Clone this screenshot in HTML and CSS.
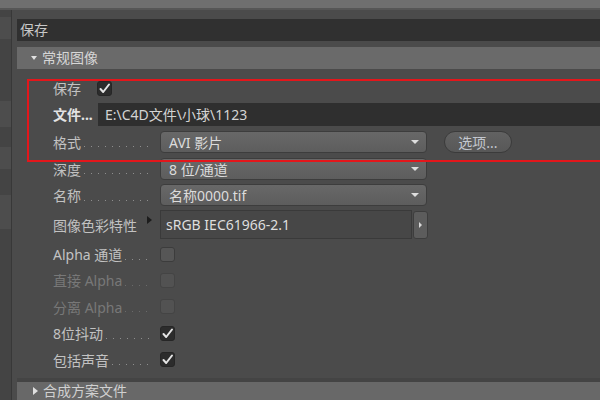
FILE: index.html
```html
<!DOCTYPE html>
<html lang="zh-CN">
<head>
  <meta charset="utf-8">
  <title>保存</title>
  <link rel="stylesheet" href="styles.css">
</head>
<body>
  <div class="window">
    <div class="topbar"></div>
    <div class="body">
      <aside class="side">
        <div class="side-block b1"></div>
        <div class="side-block b2"></div>
        <div class="side-block b3"></div>
        <div class="side-block b4"></div>
      </aside>
      <main class="panel">
        <div class="title-bar">保存</div>
        <div class="group-head"><span class="tri-down"></span>常规图像</div>
        <div class="rows">
          <div class="row row-first">
            <span class="label short">保存</span>
            <span class="check on"><svg width="13" height="13" viewBox="0 0 13 13"><path d="M2.5 7 L5.2 10 L11 2.5" fill="none" stroke="#e4e4e4" stroke-width="2" stroke-linecap="round" stroke-linejoin="round"/></svg></span>
          </div>
          <div class="row row-file">
            <span class="label short strong">文件...</span>
            <div class="path-field">E:\C4D文件\小球\1123</div>
          </div>
          <div class="row">
            <span class="label">格式<span class="leader"></span></span>
            <div class="select">AVI 影片<span class="arrow"></span></div>
            <button type="button" class="pill">选项...</button>
          </div>
          <div class="row">
            <span class="label">深度<span class="leader"></span></span>
            <div class="select">8 位/通道<span class="arrow"></span></div>
          </div>
          <div class="row row-s">
            <span class="label">名称<span class="leader"></span></span>
            <div class="select">名称0000.tif<span class="arrow"></span></div>
          </div>
          <div class="row row-profile">
            <span class="label">图像色彩特性<span class="spacer"></span><span class="tri-right"></span></span>
            <div class="profile-field">sRGB IEC61966-2.1</div>
            <div class="profile-btn"><span class="tri-small"></span></div>
          </div>
          <div class="row row-s">
            <span class="label">Alpha 通道<span class="leader"></span></span>
            <span class="check"></span>
          </div>
          <div class="row row-s dim">
            <span class="label">直接 Alpha<span class="leader"></span></span>
            <span class="check"></span>
          </div>
          <div class="row dim">
            <span class="label">分离 Alpha<span class="leader"></span></span>
            <span class="check"></span>
          </div>
          <div class="row row-s">
            <span class="label">8位抖动<span class="leader"></span></span>
            <span class="check on"><svg width="13" height="13" viewBox="0 0 13 13"><path d="M2.5 7 L5.2 10 L11 2.5" fill="none" stroke="#e4e4e4" stroke-width="2" stroke-linecap="round" stroke-linejoin="round"/></svg></span>
          </div>
          <div class="row">
            <span class="label">包括声音<span class="leader"></span></span>
            <span class="check on"><svg width="13" height="13" viewBox="0 0 13 13"><path d="M2.5 7 L5.2 10 L11 2.5" fill="none" stroke="#e4e4e4" stroke-width="2" stroke-linecap="round" stroke-linejoin="round"/></svg></span>
          </div>
        </div>
        <div class="group-head closed"><span class="tri-closed"></span>合成方案文件</div>
      </main>
    </div>
    <div class="highlight"></div>
  </div>
</body>
</html>
```

FILE: styles.css
```css
body {
  margin: 0;
  background: #4b4b4b;
  font-family: "Noto Sans", "Noto Sans CJK SC", sans-serif;
  font-size: 14px;
  color: #c2c2c2;
}
.window {
  position: relative;
  width: 600px;
  height: 400px;
  overflow: hidden;
  display: flex;
  flex-direction: column;
}
.topbar {
  height: 8px;
  background: #6f6f6f;
  border-bottom: 2px solid #565656;
  flex-shrink: 0;
}
.body {
  display: flex;
  flex: 1 0 auto;
}
.side {
  width: 11px;
  background: #444444;
  border-right: 1px solid #383838;
  padding-top: 7px;
  flex-shrink: 0;
}
.side-block {
  background: #4d4d4d;
  height: 22px;
}
.b2 { margin-top: 62px; height: 26px; }
.b3 { margin-top: 20px; }
.b4 { margin-top: 26px; height: 34px; }
.panel {
  flex: 1;
  margin-left: 5px;
  padding-top: 9px;
}
.title-bar {
  height: 22px;
  line-height: 22px;
  background: #303030;
  padding-left: 3px;
  color: #c8c8c8;
}
.group-head {
  margin-top: 6px;
  height: 22px;
  line-height: 22px;
  background: #6a6a6a;
  color: #d6d6d6;
  padding-left: 14px;
  display: flex;
  align-items: center;
}
.group-head.closed {
  margin-top: 0;
  height: 18px;
  line-height: 18px;
  border-top: 4px solid #444444;
  background: #686868;
  padding-left: 16px;
  color: #d0d0d0;
}
.tri-down {
  width: 0;
  height: 0;
  border-left: 3px solid transparent;
  border-right: 3px solid transparent;
  border-top: 4px solid #e0e0e0;
  margin-right: 5px;
}
.tri-closed {
  width: 0;
  height: 0;
  border-top: 4px solid transparent;
  border-bottom: 4px solid transparent;
  border-left: 5px solid #e0e0e0;
  margin-right: 5px;
}
.rows {
  height: 309px;
  box-sizing: border-box;
  padding-top: 7px;
}
.row {
  display: flex;
  align-items: center;
  height: 27px;
  padding-left: 36px;
}
.row-first { height: 24px; }
.row-file { height: 28px; }
.row-s { height: 26px; }
.row-profile { height: 33px; }
.label {
  width: 107px;
  flex-shrink: 0;
  display: flex;
  align-items: center;
  white-space: nowrap;
}
.label.short { width: 44px; }
.label.strong {
  font-weight: bold;
  color: #e2e2e2;
}
.dim .label { color: #787878; }
.leader {
  flex: 1;
  height: 1px;
  margin: 10px 7px 0 3px;
  background-image: linear-gradient(to right, #8e8e8e 1px, transparent 1px);
  background-size: 7px 1px;
}
.dim .leader {
  background-image: linear-gradient(to right, #6a6a6a 1px, transparent 1px);
}
.spacer { flex: 1; }
.tri-right {
  width: 0;
  height: 0;
  border-top: 4px solid transparent;
  border-bottom: 4px solid transparent;
  border-left: 5px solid #1c1c1c;
  margin-right: 8px;
  transform: translateY(-5px);
}
.check {
  width: 15px;
  height: 15px;
  box-sizing: border-box;
  border: 1px solid #3c3c3c;
  border-radius: 3px;
  background: #565656;
  display: flex;
  align-items: center;
  justify-content: center;
}
.check.on { background: #2c2c2c; border-color: #262626; }
.dim .check { background: #525252; border-color: #444444; }
.path-field {
  flex: 1;
  margin-left: 1px;
  height: 23px;
  line-height: 23px;
  background: #2f2f2f;
  padding-left: 7px;
  color: #d4d4d4;
}
.select {
  width: 267px;
  height: 22px;
  box-sizing: border-box;
  border: 1px solid #3d3d3d;
  border-radius: 4px;
  background: linear-gradient(#686868, #5d5d5d);
  padding: 0 7px 0 8px;
  color: #dcdcdc;
  display: flex;
  align-items: center;
  justify-content: space-between;
}
.arrow {
  width: 0;
  height: 0;
  border-left: 4px solid transparent;
  border-right: 4px solid transparent;
  border-top: 4px solid #dedede;
}
.pill {
  margin-left: 17px;
  width: 68px;
  height: 22px;
  border-radius: 11px;
  border: 1px solid #3b3b3b;
  background: linear-gradient(#626262, #585858);
  color: #c3c7ce;
  font: inherit;
  padding: 0;
}
.profile-field {
  width: 252px;
  height: 29px;
  box-sizing: border-box;
  border: 1px solid #3a3a3a;
  background: #474747;
  padding-left: 5px;
  line-height: 27px;
  color: #dedede;
}
.profile-btn {
  width: 15px;
  height: 28px;
  margin-left: 1px;
  box-sizing: border-box;
  border: 1px solid #3d3d3d;
  border-radius: 3px;
  background: #5c5c5c;
  display: flex;
  align-items: center;
  justify-content: center;
}
.tri-small {
  width: 0;
  height: 0;
  border-top: 3px solid transparent;
  border-bottom: 3px solid transparent;
  border-left: 3px solid #d8d8d8;
}
.highlight {
  position: absolute;
  left: 27px;
  top: 79px;
  width: 600px;
  height: 83px;
  box-sizing: border-box;
  border: 2px solid #e3161b;
}
```
